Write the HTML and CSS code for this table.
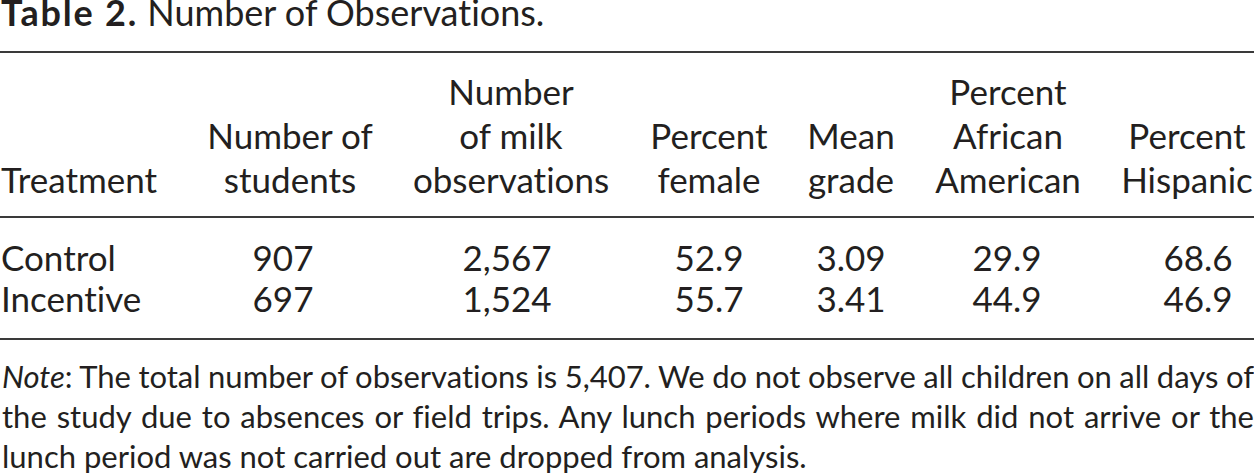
FILE: index.html
```html
<!DOCTYPE html>
<html lang="en">
<head>
<meta charset="utf-8">
<title>Table 2. Number of Observations.</title>
<link rel="stylesheet" href="styles.css">
</head>
<body>
<div class="page">
  <div class="caption"><span class="label">Table 2.</span> Number of Observations.</div>
  <table class="obs">
    <colgroup>
      <col class="c1"><col class="c2"><col class="c3"><col class="c4"><col class="c5"><col class="c6"><col class="c7">
    </colgroup>
    <thead>
      <tr>
        <th class="first">Treatment</th>
        <th class="k2">Number of<br>students</th>
        <th class="k3">Number<br>of milk<br>observations</th>
        <th class="k4">Percent<br>female</th>
        <th class="k5">Mean<br>grade</th>
        <th class="k6">Percent<br>African<br>American</th>
        <th class="k7">Percent<br>Hispanic</th>
      </tr>
    </thead>
    <tbody>
      <tr class="r-first">
        <td class="first">Control</td>
        <td class="k2">907</td>
        <td class="k3">2,567</td>
        <td class="k4">52.9</td>
        <td class="k5">3.09</td>
        <td class="k6">29.9</td>
        <td class="k7">68.6</td>
      </tr>
      <tr class="r-last">
        <td class="first">Incentive</td>
        <td class="k2">697</td>
        <td class="k3">1,524</td>
        <td class="k4">55.7</td>
        <td class="k5">3.41</td>
        <td class="k6">44.9</td>
        <td class="k7">46.9</td>
      </tr>
    </tbody>
  </table>
  <p class="note"><span class="line"><em>Note</em>: The total number of observations is 5,407. We do not observe all children on all days of</span> <span class="line">the study due to absences or field trips. Any lunch periods where milk did not arrive or the</span> <span class="line end">lunch period was not carried out are dropped from analysis.</span></p>
</div>
</body>
</html>
```

FILE: styles.css
```css
html, body {
  margin: 0;
  padding: 0;
  background: #ffffff;
}

.page {
  width: 1254px;
  color: #231f20;
  font-family: "Lato", "Liberation Sans", sans-serif;
  font-variant-ligatures: none;
  font-feature-settings: "liga" 0, "clig" 0;
}

.caption {
  font-size: 36px;
  line-height: 24px;
  padding-left: 1px;
}

.caption .label {
  font-weight: 700;
  letter-spacing: 1.8px;
}

.obs {
  width: 1254px;
  margin-top: 27px;
  table-layout: fixed;
  border-collapse: separate;
  border-spacing: 0;
  border-top: 2px solid #3a3a3a;
  border-bottom: 2px solid #3a3a3a;
  font-size: 35px;
}

.c1 { width: 190px; }
.c2 { width: 200px; }
.c3 { width: 242px; }
.c4 { width: 154px; }
.c5 { width: 130px; }
.c6 { width: 200px; }
.c7 { width: 138px; }

.obs th {
  font-weight: 400;
  line-height: 44px;
  text-align: center;
  vertical-align: bottom;
  padding: 16px 0 15px;
  border-bottom: 2px solid #3a3a3a;
  white-space: nowrap;
}

.obs td {
  line-height: 41px;
  text-align: center;
  padding: 0;
  white-space: nowrap;
}

.obs .first {
  text-align: left;
  padding-left: 1px;
}

.obs .r-first td { padding-top: 19px; }
.obs .r-last td { padding-bottom: 19px; }

.obs th.k6 { padding-right: 16px; }
.obs th.k7 { padding-left: 4px; }

.obs td.k2 { padding-right: 14px; }
.obs td.k3 { padding-right: 8px; }
.obs td.k6 { padding-right: 18px; }
.obs td.k7 { padding-left: 26px; }

.note {
  margin: 16px 0 0;
  font-size: 31px;
  line-height: 40px;
  word-spacing: -2px;
  padding-left: 2px;
}

.note em {
  font-style: italic;
}

.note .line {
  display: block;
  text-align: justify;
  text-align-last: justify;
}

.note .line.end {
  text-align: left;
  text-align-last: left;
  word-spacing: 0;
}
```
